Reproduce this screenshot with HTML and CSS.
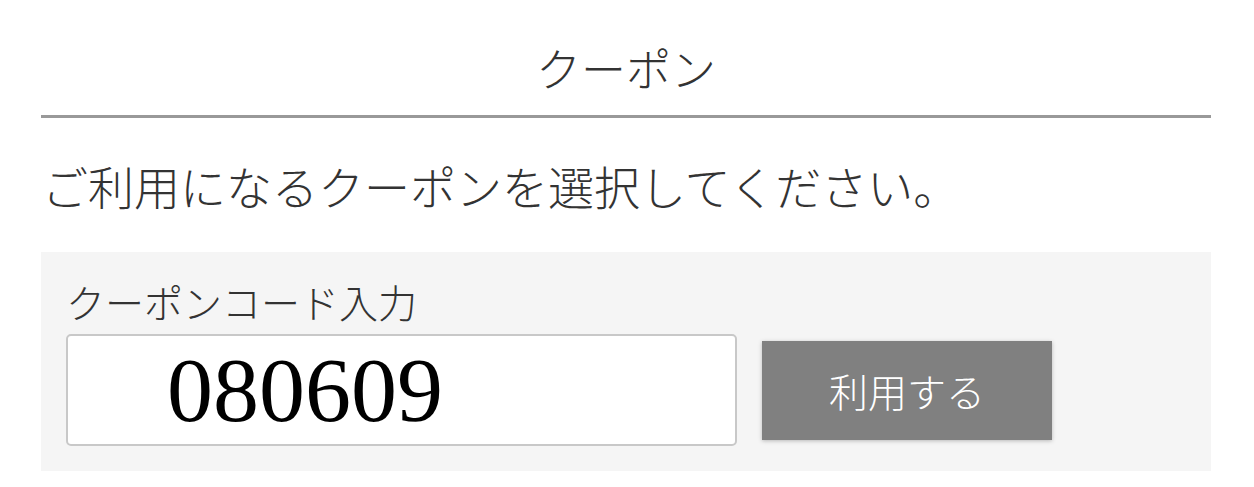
FILE: index.html
```html
<!DOCTYPE html>
<html lang="ja">
<head>
    <meta charset="UTF-8">
    <meta name="viewport" content="width=device-width, initial-scale=1.0">
    <title>クーポン</title>
    <link rel="stylesheet" href="styles.css">
</head>
<body>
    <div class="kupon-sayfa">
        <!-- Başlık -->
        <h1 class="baslik">クーポン</h1>

        <p class="aciklama">ご利用になるクーポンを選択してください。</p>

        <!-- Kupon kodu giriş alanı -->
        <div class="kod-alani">
            <label class="kod-etiket" for="kuponKodu">クーポンコード入力</label>
            <div class="kod-satir">
                <input class="kod-girdi" id="kuponKodu" type="text" value="080609">
                <button class="kullan-buton">利用する</button>
            </div>
        </div>
    </div>
</body>
</html>
```

FILE: styles.css
```css
body {
    margin: 0;
    background-color: #fff;
    color: #333;
    font-family: "Noto Sans CJK JP", "Noto Sans", sans-serif;
    font-weight: 300;
}

.kupon-sayfa {
    padding: 0 43px 0 41px;
}

/* Sayfa başlığı ve alt çizgi */
.baslik {
    margin: 33px 0 0;
    padding-bottom: 12px;
    border-bottom: 3px solid #999;
    font-size: 45px;
    font-weight: 300;
    line-height: 70px;
    text-align: center;
}

.aciklama {
    margin: 37px 0 0;
    padding-left: 1px;
    font-size: 46px;
    line-height: 60px;
}

/* Gri kutu */
.kod-alani {
    margin-top: 37px;
    padding: 24px 25px 25px;
    background-color: #f5f5f5;
}

.kod-etiket {
    display: block;
    margin-bottom: 8px;
    font-size: 39px;
    line-height: 50px;
}

.kod-satir {
    display: flex;
    align-items: center;
    gap: 25px;
}

.kod-girdi {
    box-sizing: border-box;
    width: 671px;
    height: 112px;
    margin: 0;
    padding: 0 0 0 99px;
    border: 2px solid #c8c8c8;
    border-radius: 5px;
    background-color: #fff;
    color: #000;
    font-family: "Liberation Serif", serif;
    font-size: 92px;
    outline: none;
}

.kullan-buton {
    width: 290px;
    height: 99px;
    border: none;
    background-color: #808080;
    box-shadow: 0 1px 4px rgba(0,0,0,0.25);
    color: #fff;
    font-family: "Noto Sans CJK JP", sans-serif;
    font-size: 39px;
    font-weight: 300;
    cursor: pointer;
}
```
